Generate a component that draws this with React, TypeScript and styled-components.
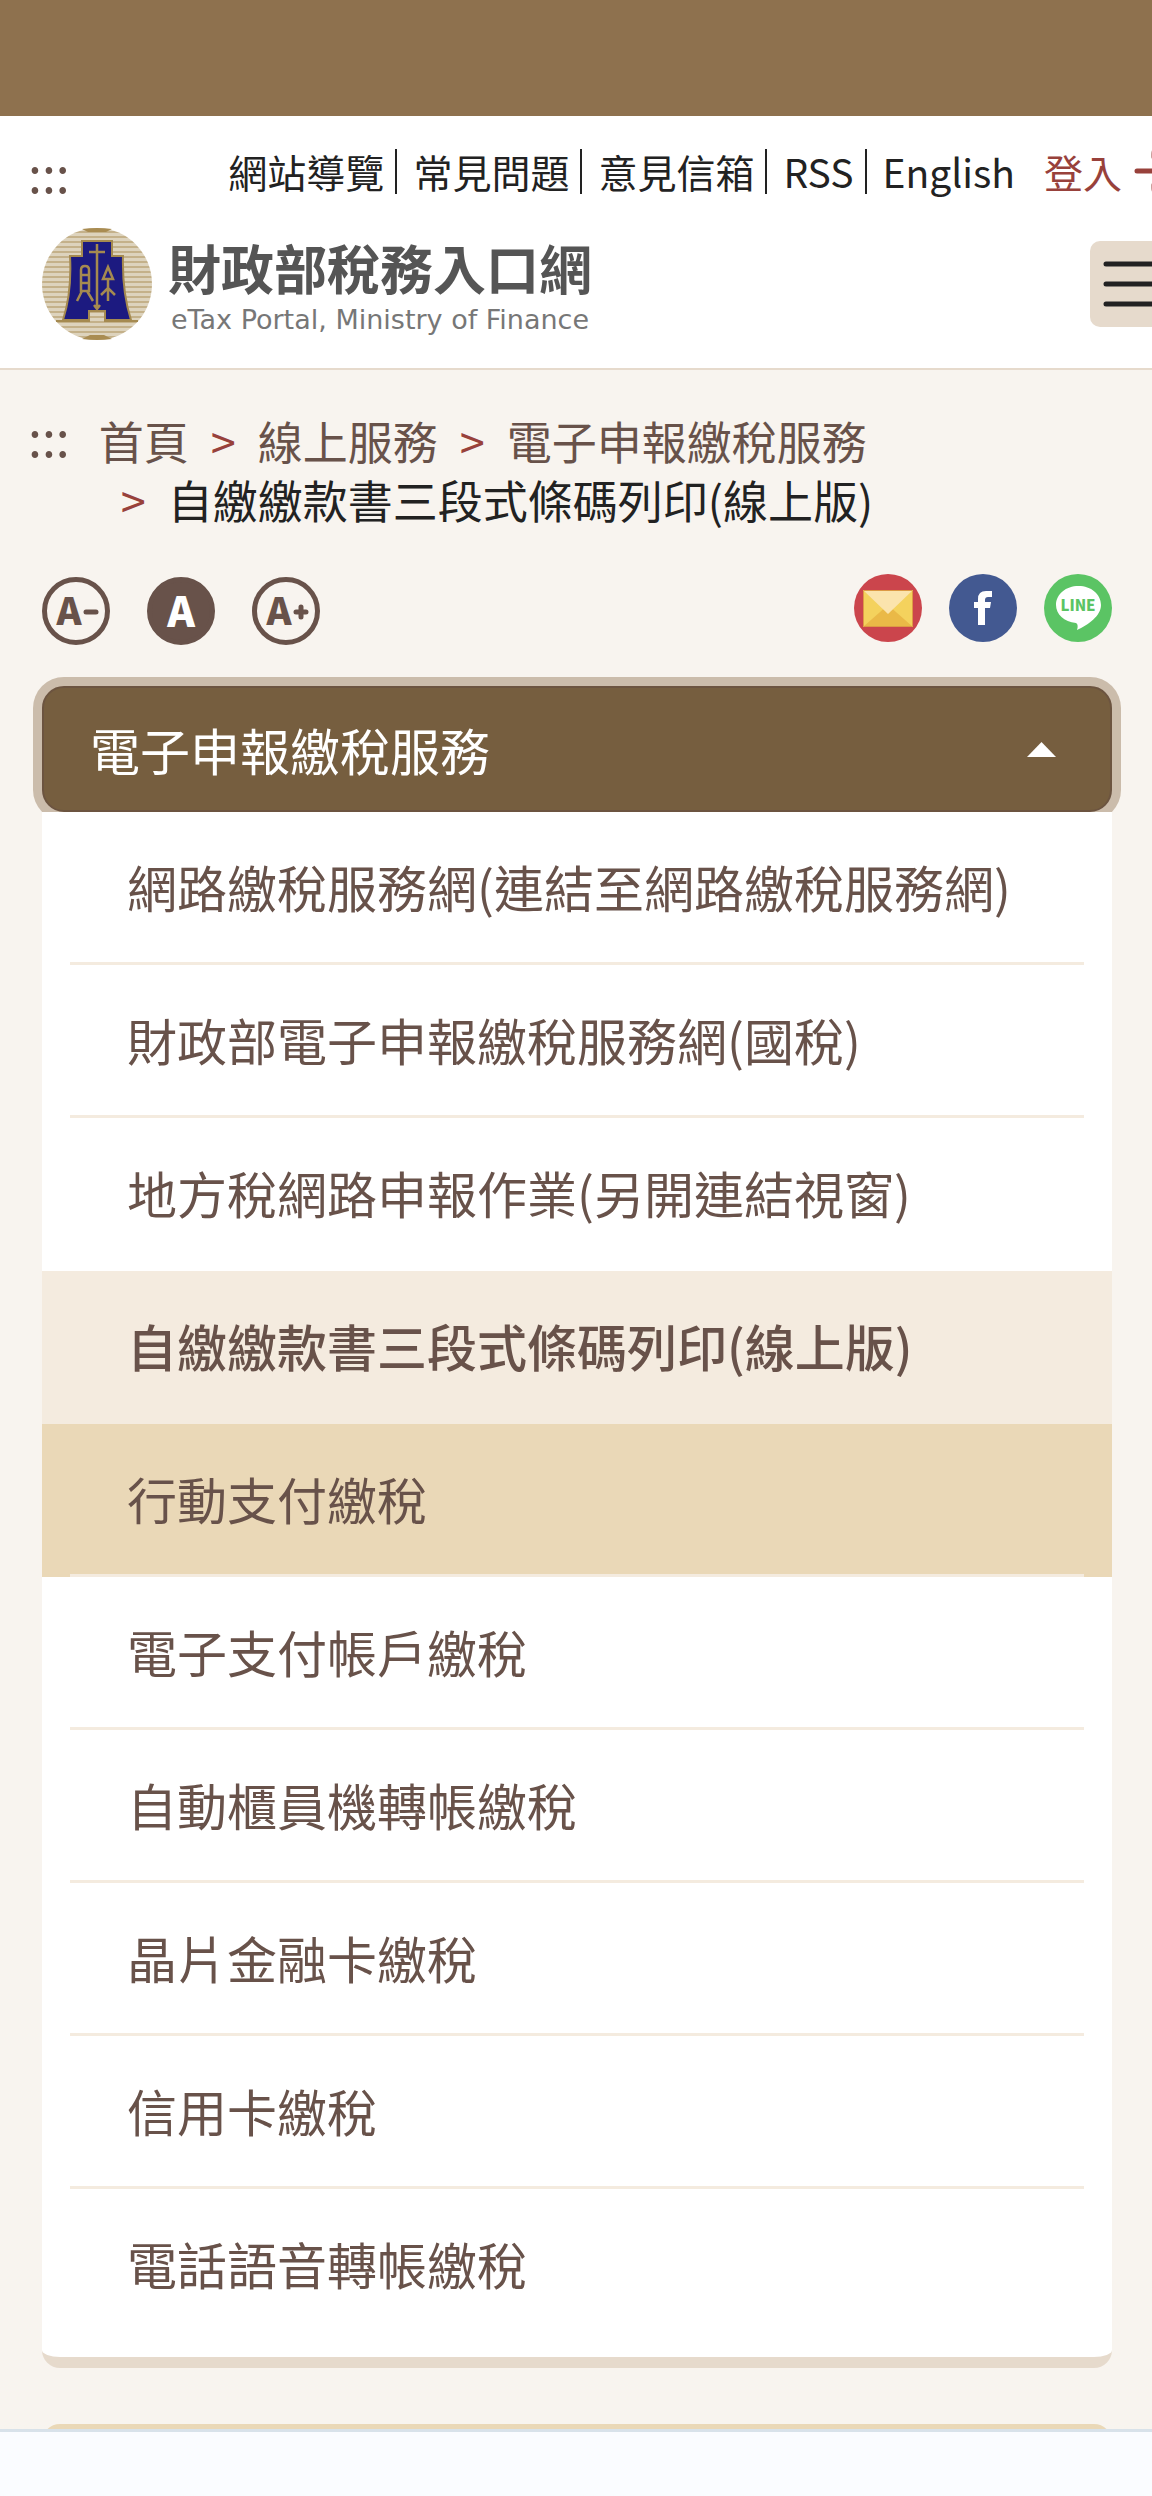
import React from "react";
import styled, { createGlobalStyle } from "styled-components";

const Global = createGlobalStyle`
  *, *::before, *::after { box-sizing: border-box; }
  body { margin: 0; background: #f8f4ef; }
  body, button { font-family: "Noto Sans CJK TC", "Noto Sans", sans-serif; }
  a { color: inherit; text-decoration: none; }
  ul, ol { list-style: none; margin: 0; padding: 0; }
  button { border: 0; padding: 0; cursor: pointer; color: inherit; }
  svg { display: block; }
`;

const Page = styled.div`
  min-height: 100vh;
  overflow: hidden;
  color: #222;
`;

const TopBand = styled.div`
  height: 116px;
  background: #8e714e;
`;

const Header = styled.header`
  height: 254px;
  background: #fff;
  border-bottom: 2px solid #e6dacc;
`;

const HeaderRow = styled.div<{ $height: number }>`
  display: flex;
  align-items: center;
  height: ${(p) => p.$height}px;
  width: calc(100% + 24px);
  padding-left: 28px;
`;

const AccessKey = styled.a`
  flex: none;
  font-size: 50px;
  line-height: 48px;
  color: #68524a;
`;

const TopNav = styled.nav`
  display: flex;
  align-items: center;
  margin-left: auto;
  font-size: 39px;
  line-height: 45px;
  white-space: nowrap;
`;

const NavList = styled.ul`
  display: flex;
`;

const NavItem = styled.li`
  padding: 0 11px 0 16px;
  & + & { border-left: 2px solid #222; }
`;

const Login = styled.a`
  display: flex;
  align-items: center;
  gap: 12px;
  padding-left: 18px;
  color: #98413b;
`;

const Logo = styled.a`
  display: flex;
  align-items: center;
  gap: 15px;
  padding-left: 14px;
`;

const LogoText = styled.span`
  display: flex;
  flex-direction: column;
  align-items: center;
  color: #555;
`;

const LogoTitle = styled.span`
  font-size: 53px;
  line-height: 72px;
  font-weight: 700;
`;

const LogoSub = styled.span`
  font-family: "DejaVu Sans", "Noto Sans", sans-serif;
  font-size: 27px;
  line-height: 34px;
  color: #777;
`;

const MenuButton = styled.button`
  display: grid;
  place-items: center;
  flex: none;
  width: 86px;
  height: 86px;
  margin-left: auto;
  border-radius: 10px;
  background: #e6dacc;
`;

const Main = styled.main`
  padding: 41px 40px 0 28px;
`;

const BreadcrumbBar = styled.nav`
  display: flex;
  align-items: flex-start;
`;

const Crumbs = styled.ol`
  display: flex;
  flex-wrap: wrap;
  width: 800px;
  max-width: 100%;
  margin-left: 29px;
  font-size: 45px;
  line-height: 59px;
`;

const Crumb = styled.li<{ $current?: boolean }>`
  color: ${(p) => (p.$current ? "#222" : "#68524a")};
  &:not(:first-child)::before {
    content: ">";
    margin: 0 22px;
    color: #98413b;
  }
`;

const Tools = styled.div`
  display: flex;
  justify-content: space-between;
  align-items: flex-start;
  margin: 45px 0 41px 14px;
`;

const ToolGroup = styled.div<{ $gap: number; $top?: number }>`
  display: flex;
  gap: ${(p) => p.$gap}px;
  padding-top: ${(p) => p.$top ?? 0}px;
`;

const RoundButton = styled.button`
  width: 68px;
  height: 68px;
  border-radius: 50%;
  background: none;
`;

const Panel = styled.section`
  margin: 0 0 0 14px;
`;

const PanelToggle = styled.button`
  display: flex;
  align-items: center;
  justify-content: space-between;
  width: 100%;
  height: 126px;
  padding: 0 54px 0 46px;
  border: 2px solid #6c5440;
  border-radius: 22px;
  background: #765e3f;
  box-shadow: 0 0 0 9px #cbbcab;
  color: #fff;
  font-size: 50px;
  line-height: 72px;
`;

const PanelList = styled.ul`
  position: relative;
  padding-bottom: 15px;
  background: #fff;
  border-bottom: 11px solid #e6dacc;
  border-radius: 0 0 18px 18px;
`;

const tones = {
  plain: { background: "transparent", line: "#f4ebdf" },
  none: { background: "transparent", line: "transparent" },
  current: { background: "#f4ebdf", line: "transparent" },
  hover: { background: "#ead8b7", line: "#f4ebdf" },
};

const Entry = styled.li<{ $tone: keyof typeof tones }>`
  padding: 0 28px;
  background: ${(p) => tones[p.$tone].background};
  font-weight: ${(p) => (p.$tone === "current" ? 500 : 400)};
  a {
    display: block;
    height: 153px;
    padding: 0 57px;
    border-bottom: 3px solid ${(p) => tones[p.$tone].line};
    font-size: 50px;
    line-height: 148px;
    color: #68524a;
  }
`;

const NextPanel = styled.section`
  height: 72px;
  margin: 56px 0 0 14px;
  border-radius: 18px 18px 0 0;
  background: #ead8b7;
`;

const BottomBar = styled.div`
  position: fixed;
  left: 0;
  right: 0;
  bottom: 0;
  height: 67px;
  border-top: 3px solid #d8e2ea;
  background: #fafcff;
`;

const Emblem = () => (
  <svg width="111" height="112" viewBox="0 0 111 112" aria-hidden="true">
    <defs>
      <pattern id="stripes" width="111" height="5" patternUnits="userSpaceOnUse">
        <rect width="111" height="5" fill="#ddd3bd" />
        <rect y="3" width="111" height="2" fill="#c4b18a" />
      </pattern>
    </defs>
    <ellipse cx="55" cy="56" rx="55" ry="56" fill="url(#stripes)" />
    <path d="M40 1q15-2 30 0l-6 3H46zM40 111q15 2 30 0l-8-4H48z" fill="#a98c52" />
    <path d="M40 13h30v15h11q-1 36 8 64H63V83H47v9H21q9-28 7-64h12z" fill="#1c1a80" stroke="#a58a50" strokeWidth="2" />
    <path d="M14 93h34M62 93h34" stroke="#a58a50" strokeWidth="2" />
    <g fill="none" stroke="#a58a50" strokeWidth="2.500">
      <path d="M55 16v63M47 24h16M52 77l3 4 3-4" />
      <path d="M39 63V42q0-4 4-4t4 4v21zM39 47h8M39 55h8M40 63l-5 10M45 63l6 10" />
      <path d="M66 39l-5 12h10zM66 51v22M59 67l7-7 7 7" />
    </g>
  </svg>
);

const LoginIcon = () => (
  <svg width="42" height="60" viewBox="0 0 42 60" fill="none" stroke="#98413b" strokeWidth="5" strokeLinecap="round" aria-hidden="true">
    <path d="M3 30h24M20 16v-3q0-7 8-7h12M20 44v3q0 7 8 7h12" />
  </svg>
);

const sizeMarks = { minus: "M44 35h10", none: "", plus: "M44 35h10M49 30v10" };

const SizeIcon = ({ mark }: { mark: keyof typeof sizeMarks }) => {
  const filled = mark === "none";
  return (
    <svg width="68" height="68" viewBox="0 0 68 68" aria-hidden="true">
      <circle cx="34" cy="34" r="31.500" fill={filled ? "#68524a" : "none"} stroke="#68524a" strokeWidth="5" />
      <text x={filled ? 34 : 27} y={filled ? 50 : 48} textAnchor="middle" fontFamily="Noto Sans CJK TC, sans-serif" fontWeight="900" fontSize={filled ? 42 : 38} fill={filled ? "#fff" : "#68524a"}>A</text>
      <path d={sizeMarks[mark]} stroke="#68524a" strokeWidth="5" strokeLinecap="round" />
    </svg>
  );
};

const MailIcon = () => (
  <svg width="68" height="68" viewBox="0 0 68 68" aria-hidden="true">
    <circle cx="34" cy="34" r="34" fill="#cb454c" />
    <path d="M9 16h50v37H9z" fill="#f4d25d" />
    <path d="M9 53l25-22 25 22z" fill="#eab947" />
    <path d="M9 16h50L34 40z" fill="#fbe4ad" />
    <path d="M9.500 16.500h49v36h-49z" fill="none" stroke="#dd9a45" strokeWidth="1" />
  </svg>
);

const FacebookIcon = () => (
  <svg width="68" height="68" viewBox="0 0 68 68" aria-hidden="true">
    <circle cx="34" cy="34" r="34" fill="#435991" />
    <path d="M29 51V34h-4v-6h4v-3q0-8 8-8h6v6h-4q-3 0-3 3v2h6l-1 6h-5v17z" fill="#fff" />
  </svg>
);

const LineIcon = () => (
  <svg width="68" height="68" viewBox="0 0 68 68" aria-hidden="true">
    <circle cx="34" cy="34" r="34" fill="#5bc464" />
    <path d="M34.500 12C47 12 57 20 57 31 57 42 44 51 33 56 34 53 34 50 32 49 20 48 12 40 12 31 12 20 22 12 34.500 12z" fill="#fff" />
    <text x="34" y="37" textAnchor="middle" fontFamily="Noto Sans CJK TC, sans-serif" fontWeight="900" fontSize="15" fill="#5bc464">LINE</text>
  </svg>
);

const links = ["網站導覽", "常見問題", "意見信箱", "RSS", "English"];
const crumbs = ["首頁", "線上服務", "電子申報繳稅服務", "自繳繳款書三段式條碼列印(線上版)"];

const entries: { label: string; tone: keyof typeof tones }[] = [
  { label: "網路繳稅服務網(連結至網路繳稅服務網)", tone: "plain" },
  { label: "財政部電子申報繳稅服務網(國稅)", tone: "plain" },
  { label: "地方稅網路申報作業(另開連結視窗)", tone: "none" },
  { label: "自繳繳款書三段式條碼列印(線上版)", tone: "current" },
  { label: "行動支付繳稅", tone: "hover" },
  { label: "電子支付帳戶繳稅", tone: "plain" },
  { label: "自動櫃員機轉帳繳稅", tone: "plain" },
  { label: "晶片金融卡繳稅", tone: "plain" },
  { label: "信用卡繳稅", tone: "plain" },
  { label: "電話語音轉帳繳稅", tone: "none" },
];

export default function App() {
  return (
    <Page>
      <Global />
      <TopBand />
      <Header>
        <HeaderRow $height={110}>
          <AccessKey href="#header">:::</AccessKey>
          <TopNav>
            <NavList>
              {links.map((label) => (
                <NavItem key={label}><a href="#nav">{label}</a></NavItem>
              ))}
            </NavList>
            <Login href="#login">登入<LoginIcon /></Login>
          </TopNav>
        </HeaderRow>
        <HeaderRow $height={116}>
          <Logo href="#home">
            <Emblem />
            <LogoText>
              <LogoTitle>財政部稅務入口網</LogoTitle>
              <LogoSub>eTax Portal, Ministry of Finance</LogoSub>
            </LogoText>
          </Logo>
          <MenuButton aria-label="選單">
            <svg width="60" height="46" viewBox="0 0 60 46" stroke="#222" strokeWidth="5" strokeLinecap="round" aria-hidden="true">
              <path d="M3 3h54M3 23h54M3 43h54" />
            </svg>
          </MenuButton>
        </HeaderRow>
      </Header>
      <Main>
        <BreadcrumbBar>
          <AccessKey href="#content">:::</AccessKey>
          <Crumbs>
            {crumbs.map((label, i) => (
              <Crumb key={label} $current={i === crumbs.length - 1}><a href="#crumb">{label}</a></Crumb>
            ))}
          </Crumbs>
        </BreadcrumbBar>
        <Tools>
          <ToolGroup $gap={37} $top={3}>
            <RoundButton aria-label="縮小字級"><SizeIcon mark="minus" /></RoundButton>
            <RoundButton aria-label="預設字級"><SizeIcon mark="none" /></RoundButton>
            <RoundButton aria-label="放大字級"><SizeIcon mark="plus" /></RoundButton>
          </ToolGroup>
          <ToolGroup $gap={27}>
            <RoundButton aria-label="Email"><MailIcon /></RoundButton>
            <RoundButton aria-label="Facebook"><FacebookIcon /></RoundButton>
            <RoundButton aria-label="LINE"><LineIcon /></RoundButton>
          </ToolGroup>
        </Tools>
        <Panel>
          <PanelToggle aria-expanded="true">
            電子申報繳稅服務
            <svg width="29" height="15" viewBox="0 0 29 15" aria-hidden="true"><path d="M0 15L14.500 0 29 15z" fill="#fff" /></svg>
          </PanelToggle>
          <PanelList>
            {entries.map(({ label, tone }) => (
              <Entry key={label} $tone={tone}><a href="#service">{label}</a></Entry>
            ))}
          </PanelList>
        </Panel>
        <NextPanel />
      </Main>
      <BottomBar />
    </Page>
  );
}
